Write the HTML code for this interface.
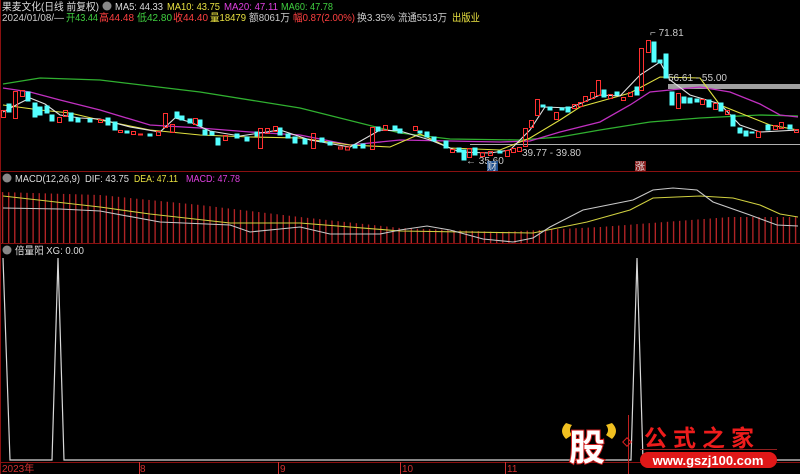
<!DOCTYPE html>
<html><head><meta charset="utf-8"><style>
body{margin:0;background:#000;width:800px;height:474px;overflow:hidden;font-family:"Liberation Sans","Noto Sans CJK SC",sans-serif}
svg{position:absolute;left:0;top:0}
</style></head><body>
<svg width="800" height="474" viewBox="0 0 800 474" font-family="Liberation Sans, Noto Sans CJK SC, sans-serif">
<defs><pattern id="bar" width="6.1" height="20" patternUnits="userSpaceOnUse"><rect x="2" width="1.2" height="20" fill="#c8282a"/></pattern></defs>
<line x1="0.5" y1="0" x2="0.5" y2="474" stroke="#8a1010"/>
<line x1="0" y1="171.5" x2="800" y2="171.5" stroke="#8a1010"/>
<line x1="0" y1="243.5" x2="800" y2="243.5" stroke="#8a1010"/>
<line x1="0" y1="462.5" x2="800" y2="462.5" stroke="#8a1010"/>
<g font-size="10.5" lengthAdjust="spacingAndGlyphs">
<circle cx="107" cy="6" r="4.5" fill="#888"/>
<text x="2" y="10" fill="#ddd" textLength="97" lengthAdjust="spacingAndGlyphs">果麦文化(日线 前复权)</text>
<text x="115" y="10" fill="#ddd" textLength="48" lengthAdjust="spacingAndGlyphs">MA5: 44.33</text>
<text x="167" y="10" fill="#e8e040" textLength="53" lengthAdjust="spacingAndGlyphs">MA10: 43.75</text>
<text x="224" y="10" fill="#e040e0" textLength="54" lengthAdjust="spacingAndGlyphs">MA20: 47.11</text>
<text x="281" y="10" fill="#40d040" textLength="52" lengthAdjust="spacingAndGlyphs">MA60: 47.78</text>
<text x="2" y="21" fill="#ccc" textLength="62" lengthAdjust="spacingAndGlyphs">2024/01/08/—</text>
<text x="66" y="21" fill="#40d040" textLength="32" lengthAdjust="spacingAndGlyphs">开43.44</text>
<text x="99" y="21" fill="#ff4040" textLength="35" lengthAdjust="spacingAndGlyphs">高44.48</text>
<text x="137" y="21" fill="#40d040" textLength="35" lengthAdjust="spacingAndGlyphs">低42.80</text>
<text x="173" y="21" fill="#ff4040" textLength="35" lengthAdjust="spacingAndGlyphs">收44.40</text>
<text x="210" y="21" fill="#e8e040" textLength="36" lengthAdjust="spacingAndGlyphs">量18479</text>
<text x="249" y="21" fill="#ccc" textLength="41" lengthAdjust="spacingAndGlyphs">额8061万</text>
<text x="293" y="21" fill="#ff4040" textLength="62" lengthAdjust="spacingAndGlyphs">幅0.87(2.00%)</text>
<text x="357" y="21" fill="#ccc" textLength="38" lengthAdjust="spacingAndGlyphs">换3.35%</text>
<text x="398" y="21" fill="#ccc" textLength="49" lengthAdjust="spacingAndGlyphs">流通5513万</text>
<text x="452" y="21" fill="#e8e040" textLength="28" lengthAdjust="spacingAndGlyphs">出版业</text>
</g>
<rect x="668" y="84" width="132" height="5" fill="#a0a0a0"/>
<line x1="470" y1="144.5" x2="800" y2="144.5" stroke="#b0b0b0"/>
<polyline fill="none" stroke="#30b030" stroke-width="1.3" points="3,84 40,78 100,80 200,92 300,108 400,133 450,139 520,140 560,137 600,130 650,122 700,118 760,115 798,116"/>
<polyline fill="none" stroke="#c030c0" stroke-width="1.3" points="3,88 30,92 60,100 100,110 150,125 200,128 250,132 300,135 350,145 400,140 450,141 500,142 530,141 560,132 600,122 630,105 650,92 700,87 730,92 760,104 780,115 798,117"/>
<polyline fill="none" stroke="#e0e040" stroke-width="1.1" points="3,105 40,110 70,113 100,120 150,130 200,135 250,137 300,138 350,145 390,147 420,134 450,148 500,150 530,138 560,120 580,107 630,93 660,77 700,78 720,105 770,125 798,130"/>
<polyline fill="none" stroke="#e0e0e0" stroke-width="1.1" points="3,112 20,103 30,98 45,104 60,115 80,118 100,119 130,127 160,132 175,118 190,122 210,131 240,136 260,133 280,130 310,140 350,147 380,130 400,131 430,140 460,152 490,153 510,150 530,130 545,107 570,108 600,95 620,96 640,75 660,62 670,80 690,95 720,104 740,125 760,132 798,130"/>
<g stroke-width="1">
<g fill="#54ffff" stroke="#54ffff">
<rect x="7" y="104" width="4" height="8"/><rect x="26" y="92" width="4" height="9"/><rect x="33" y="103" width="4" height="14"/><rect x="38" y="107" width="4" height="8"/><rect x="45" y="106" width="4" height="7"/><rect x="50" y="115" width="4" height="6"/><rect x="69" y="113" width="4" height="8"/><rect x="76" y="118" width="4" height="4"/><rect x="88" y="119" width="4" height="3"/><rect x="106" y="118" width="4" height="7"/><rect x="113" y="122" width="4" height="8"/><rect x="125" y="131" width="4" height="2"/><rect x="148" y="134" width="4" height="2"/><rect x="175" y="112" width="4" height="6"/><rect x="180" y="116" width="4" height="4"/><rect x="188" y="119" width="4" height="4"/><rect x="198" y="120" width="4" height="6"/><rect x="203" y="130" width="4" height="5"/><rect x="210" y="132" width="4" height="3"/><rect x="216" y="138" width="4" height="7"/><rect x="235" y="134" width="4" height="4"/><rect x="245" y="137" width="4" height="4"/><rect x="255" y="132" width="4" height="4"/><rect x="278" y="128" width="4" height="7"/><rect x="286" y="134" width="4" height="4"/><rect x="293" y="137" width="4" height="6"/><rect x="303" y="139" width="4" height="5"/><rect x="320" y="138" width="4" height="4"/><rect x="328" y="142" width="4" height="3"/><rect x="353" y="145" width="4" height="3"/><rect x="361" y="144" width="4" height="4"/><rect x="376" y="127" width="4" height="4"/><rect x="393" y="126" width="4" height="4"/><rect x="398" y="129" width="4" height="4"/><rect x="418" y="131" width="4" height="2"/><rect x="425" y="132" width="4" height="5"/><rect x="432" y="137" width="4" height="4"/><rect x="444" y="141" width="4" height="7"/><rect x="457" y="148" width="4" height="4"/><rect x="462" y="150" width="4" height="10"/><rect x="473" y="148" width="4" height="7"/><rect x="498" y="151" width="4" height="2"/><rect x="541" y="105" width="4" height="2"/><rect x="548" y="107" width="4" height="3"/><rect x="560" y="108" width="4" height="2"/><rect x="566" y="107" width="4" height="5"/><rect x="602" y="90" width="4" height="7"/><rect x="615" y="92" width="4" height="3"/><rect x="635" y="87" width="4" height="8"/><rect x="652" y="42" width="4" height="20"/><rect x="658" y="60" width="4" height="3"/><rect x="664" y="54" width="4" height="24"/><rect x="670" y="92" width="4" height="13"/><rect x="682" y="97" width="4" height="6"/><rect x="688" y="98" width="4" height="5"/><rect x="695" y="99" width="4" height="3"/><rect x="707" y="100" width="4" height="7"/><rect x="719" y="103" width="4" height="8"/><rect x="731" y="115" width="4" height="11"/><rect x="738" y="128" width="4" height="5"/><rect x="744" y="131" width="4" height="5"/><rect x="750" y="132" width="4" height="1"/><rect x="766" y="125" width="4" height="5"/><rect x="788" y="125" width="4" height="4"/>
</g>
<g fill="none" stroke="#ff3030">
<rect x="1.5" y="110.5" width="4" height="7"/><rect x="13.5" y="91.5" width="4" height="27"/><rect x="20.5" y="90.5" width="4" height="6"/><rect x="57.5" y="117.5" width="4" height="5"/><rect x="63.5" y="110.5" width="4" height="6"/><rect x="98.5" y="119.5" width="4" height="3"/><rect x="118.5" y="130.5" width="4" height="2"/><rect x="131.5" y="131.5" width="4" height="3"/><rect x="138.5" y="134" width="4" height="1"/><rect x="156.5" y="131.5" width="4" height="4"/><rect x="163.5" y="113.5" width="4" height="14"/><rect x="170.5" y="124.5" width="4" height="8"/><rect x="193.5" y="118.5" width="4" height="6"/><rect x="223.5" y="135.5" width="4" height="5"/><rect x="258.5" y="128.5" width="4" height="20"/><rect x="265.5" y="128.5" width="4" height="5"/><rect x="273.5" y="126.5" width="4" height="5"/><rect x="311.5" y="133.5" width="4" height="15"/><rect x="338.5" y="147" width="4" height="2"/><rect x="345.5" y="147" width="4" height="3"/><rect x="370.5" y="127.5" width="4" height="22"/><rect x="383.5" y="125.5" width="4" height="5"/><rect x="413.5" y="126.5" width="4" height="4"/><rect x="450.5" y="149.5" width="4" height="3"/><rect x="467.5" y="148.5" width="4" height="9"/><rect x="480.5" y="152.5" width="4" height="4"/><rect x="488.5" y="151.5" width="4" height="4"/><rect x="505.5" y="150.5" width="4" height="6"/><rect x="511.5" y="148.5" width="4" height="4"/><rect x="517.5" y="147.5" width="4" height="4"/><rect x="523.5" y="128.5" width="4" height="18"/><rect x="529.5" y="120.5" width="4" height="7"/><rect x="535.5" y="99.5" width="4" height="16"/><rect x="554.5" y="112.5" width="4" height="7"/><rect x="572.5" y="104.5" width="4" height="4"/><rect x="578.5" y="102.5" width="4" height="4"/><rect x="583.5" y="96.5" width="4" height="5"/><rect x="590.5" y="92.5" width="4" height="6"/><rect x="596.5" y="80.5" width="4" height="15"/><rect x="608.5" y="94.5" width="4" height="4"/><rect x="621.5" y="97.5" width="4" height="3"/><rect x="628.5" y="92.5" width="4" height="4"/><rect x="639.5" y="48.5" width="4" height="42"/><rect x="646.5" y="40.5" width="4" height="12"/><rect x="676.5" y="93.5" width="4" height="15"/><rect x="700.5" y="99.5" width="4" height="5"/><rect x="713.5" y="103.5" width="4" height="6"/><rect x="725.5" y="110.5" width="4" height="4"/><rect x="756.5" y="131.5" width="4" height="6"/><rect x="773.5" y="125.5" width="4" height="4"/><rect x="779.5" y="122.5" width="4" height="6"/><rect x="794.5" y="129.5" width="4" height="3"/>
</g>
</g>
<g font-size="10" fill="#ccc">
<text x="650" y="36">⌐ 71.81</text>
<text x="668" y="81">56.61 - 55.00</text>
<text x="522" y="156">39.77 - 39.80</text>
<text x="466" y="164">← 35.60</text>
</g>
<rect x="487" y="161" width="11" height="10" fill="#1f4f8f"/><text x="487" y="170" font-size="10" fill="#ddd">财</text>
<rect x="635" y="161" width="11" height="10" fill="#8a2020"/><text x="635" y="170" font-size="10" fill="#ddd">涨</text>
<circle cx="7" cy="178" r="4.5" fill="#888"/>
<g font-size="10.5"><text x="15" y="182" fill="#ddd" textLength="65" lengthAdjust="spacingAndGlyphs">MACD(12,26,9)</text><text x="85" y="182" fill="#ddd" textLength="44" lengthAdjust="spacingAndGlyphs">DIF: 43.75</text><text x="134" y="182" fill="#e8e040" textLength="44" lengthAdjust="spacingAndGlyphs">DEA: 47.11</text><text x="186" y="182" fill="#e040e0" textLength="54" lengthAdjust="spacingAndGlyphs">MACD: 47.78</text></g>
<polygon fill="url(#bar)" points="0,192 100,195 200,205 300,217 400,228 500,232 600,227 730,217 800,217 800,243 0,243"/>
<polyline fill="none" stroke="#d0d040" stroke-width="1.1" points="3,196 100,207 150,214 230,223 300,223 400,231 533,233 587,222 630,210 653,198 700,196 733,198 760,205 780,214 798,217"/>
<polyline fill="none" stroke="#c8c8c8" stroke-width="1.1" points="3,208 60,209 100,211 160,222 230,225 250,232 300,227 330,234 380,234 400,230 427,226 450,230 483,239 513,242 533,238 550,227 583,210 633,200 653,190 673,188 697,190 713,202 750,215 777,225 798,226"/>
<circle cx="7" cy="250" r="4.5" fill="#888"/>
<text x="15" y="254" font-size="10.5" fill="#ddd" textLength="69" lengthAdjust="spacingAndGlyphs">倍量阳 XG: 0.00</text>
<polyline fill="none" stroke="#d8d8d8" stroke-width="1.2" points="3,258 10,460 52,460 58,258 64,460 631,460 637,258 643,460 800,460"/>
<g font-size="10" fill="#d03030"><text x="2" y="472">2023年</text><text x="140" y="472">8</text><text x="280" y="472">9</text><text x="402" y="472">10</text><text x="507" y="472">11</text></g>
<g stroke="#d03030"><line x1="139.5" y1="462" x2="139.5" y2="474"/><line x1="278.5" y1="462" x2="278.5" y2="474"/><line x1="400.5" y1="462" x2="400.5" y2="474"/><line x1="505.5" y1="462" x2="505.5" y2="474"/></g>
<path d="M566,423 q-8,8 0,16 l6,-4 q-4,-5 0,-10z" fill="#f0c020"/>
<path d="M612,423 q8,8 0,16 l-6,-4 q4,-5 0,-10z" fill="#f0c020"/>
<text x="569" y="460" font-size="36" font-weight="bold" fill="#fff" stroke="#d02020" stroke-width="2" paint-order="stroke">股</text>
<line x1="628.5" y1="415" x2="628.5" y2="474" stroke="#c02020"/>
<rect x="624" y="439" width="6" height="6" transform="rotate(45 627 442)" fill="none" stroke="#e02020"/>
<text x="644" y="446" font-size="23" font-weight="bold" fill="#ee1c1c" letter-spacing="6">公式之家</text>
<line x1="640" y1="449.5" x2="777" y2="449.5" stroke="#902020"/>
<rect x="640" y="452" width="137" height="16" rx="8" fill="#e01818"/>
<text x="708" y="465" font-size="13" font-weight="bold" fill="#fff" text-anchor="middle">www.gszj100.com</text>
</svg>
</body></html>
